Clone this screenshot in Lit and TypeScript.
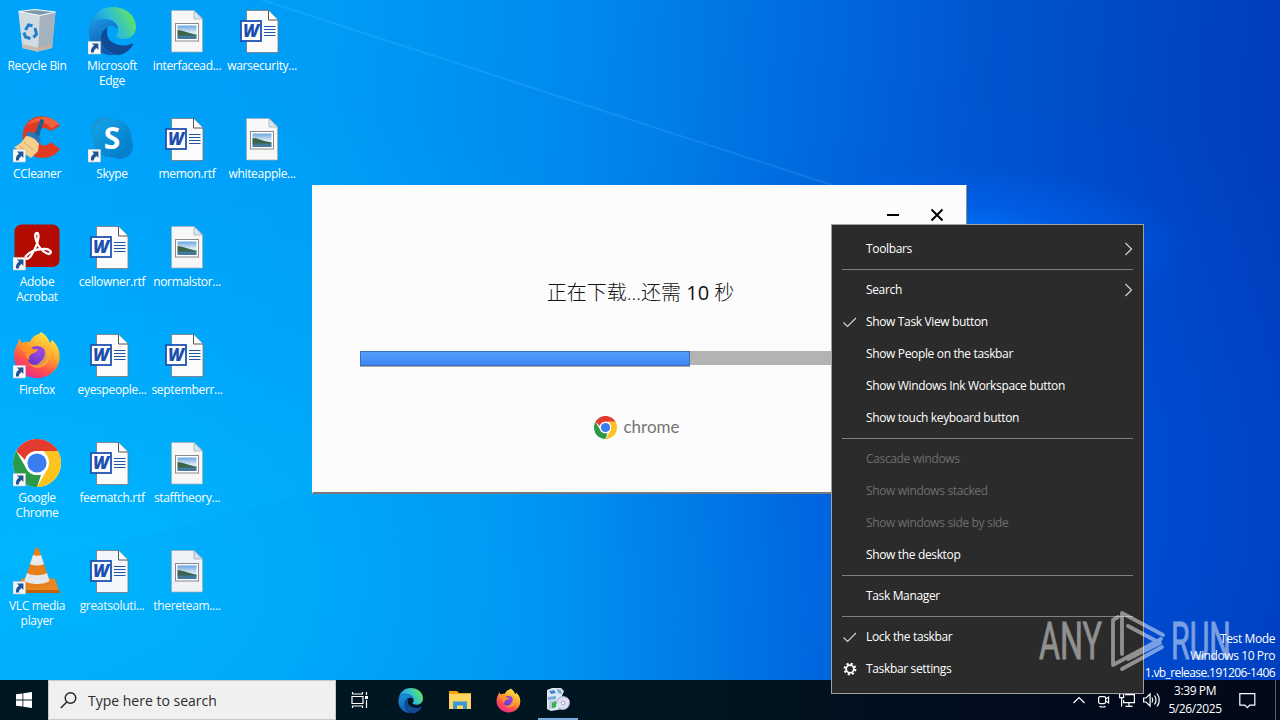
import { LitElement, css, html, svg, nothing } from 'lit'
import { customElement, property, state } from 'lit/decorators.js'
import { classMap } from 'lit/directives/class-map.js'

const shortcut = svg`
  <rect x="0" y="34.5" width="12.5" height="12.5" fill="#f8f8f8" stroke="#c9c9c9" stroke-width=".6"/>
  <path d="M4 36.6h6.4v6.2l-2-1.8c-1.6 1.1-2.4 2.6-2.6 4.4H3c-.5-3 .6-5.2 3-7z" fill="#1f5596"/>
`

const edgeArt = svg`
  <defs>
    <linearGradient id="edge-a" x1="0" y1=".6" x2="1" y2=".2">
      <stop offset="0" stop-color="#1488d8"/><stop offset=".45" stop-color="#2cb9dd"/><stop offset="1" stop-color="#66eb50"/>
    </linearGradient>
    <linearGradient id="edge-b" x1="0" y1="0" x2=".4" y2="1">
      <stop offset="0" stop-color="#1a9ae4"/><stop offset="1" stop-color="#0f57ad"/>
    </linearGradient>
  </defs>
  <path d="M1 22C2 9 12 0 25 0c13 0 23 9 23 20 0 8-6 12-12 12-5 0-8-1-8-3 0-1 2-2 2-6 0-6-6-11-14-11C9 12 3 16 1 22z" fill="url(#edge-a)"/>
  <path d="M1 22c3-7 9-10 15-10 8 0 14 4 14 10-2-3-6-4-9-3-6 2-8 7-8 12 0 9 7 16 15 17C12 50-1 38 1 22z" fill="url(#edge-b)"/>
  <path d="M20 20c-5 2-7 7-7 11 0 10 9 17 18 17 6-1 11-5 14-10 .6-1-.4-2-1.500-1.300C35 41 18 37 19 25c0-2 .4-4 1-5z" fill="#104a96"/>
`

const firefoxArt = svg`
  <defs>
    <linearGradient id="fox" x1=".8" y1="0" x2=".25" y2="1">
      <stop offset="0" stop-color="#fff14a"/><stop offset=".4" stop-color="#ffa72b"/>
      <stop offset=".7" stop-color="#ff4f4b"/><stop offset="1" stop-color="#e5259c"/>
    </linearGradient>
    <radialGradient id="fox-eye" cx=".6" cy=".3" r=".8">
      <stop offset="0" stop-color="#a447e6"/><stop offset="1" stop-color="#5b38c0"/>
    </radialGradient>
  </defs>
  <path d="M28 1c5 3 7 6 9 11 1-1 1.500-2 1.500-3.500C45 14 47 20 46.500 27 46 39 36 47 24 47S1 38 1 25c0-6 2-10 4-13 .3-2 .6-3.500 1.500-4.500C7 10 8 11 9 12c2-1 5-1.500 8-1 2-5 6-7.500 9-8z" fill="url(#fox)"/>
  <circle cx="24" cy="25" r="10" fill="url(#fox-eye)"/>
  <path d="M7 17c5-4 10-2 13 1 2 .3 4 .3 5 0-.5 3-4 4-6 5-3 1.500-3.500 4-2 6-4-1-5-5-4-8-2 0-4-1-6-4z" fill="#ff9328"/>
  <path d="M30 13c8 5 9 17 1 22-5 3-12 2-15-2 5 2 10 1 11-2 5-3 6-10 3-18z" fill="#ffb42e" opacity=".75"/>
`

const chromeArt = svg`
  <circle cx="24" cy="24" r="24" fill="#fff"/>
  <path d="M24 0c9 0 16.800 4.800 21 12H24c-6 0-11 4-12 9L3.200 12C7.400 4.800 15 0 24 0z" fill="#e33b2e"/>
  <path d="M3.200 12 13.600 30c2 3.800 6 6 10.400 6l4 0L24 48C10.700 48 0 37.300 0 24 0 19.600 1.200 15.500 3.200 12z" fill="#2a9a48"/>
  <path d="M45 12c2 3.600 3 7.700 3 12 0 13.300-10.700 24-24 24l10.400-18c2.600-5 1.600-13-4-18z" fill="#fcc31e"/>
  <circle cx="24" cy="24" r="12" fill="#fff"/>
  <circle cx="24" cy="24" r="9.600" fill="#3a7df0"/>
`

const art: Record<string, unknown> = {
  bin: svg`
    <path d="M5.500 4.500 22 2.500 42.500 5 39 41 24 44.500 9.500 41z" fill="#c6d2da"/>
    <path d="M5.500 4.500 27 8.500 25 44.500 9.500 41z" fill="#cfdae1"/>
    <path d="M27 8.500 42.500 5 39 41 25 44.500z" fill="#a3b2bd"/>
    <path d="M5.500 4.500 22 2.500 42.500 5 27 8.500z" fill="#7d98a9" stroke="#f4fafc" stroke-width="1.200"/>
    <path d="M9 37l15 3.500L39.500 37 39 41l-14 3.500L9.500 41z" fill="#c8b3a4" opacity=".8"/>
    <g fill="none" stroke="#1b7fd0" stroke-width="3">
      <path d="m12.500 23 3-5 4 .8"/><path d="m22 21 1.500 6-3 3.500"/><path d="m17.500 31.500-5-1.500-1.500-4.500"/>
    </g>`,
  edge: edgeArt,
  firefox: firefoxArt,
  chrome: chromeArt,
  ccleaner: svg`
    <path d="M47 11C38-2 19-2 12 11c-7 14 2 32 17 32 8 0 14-3 18-9l-9-7c-4 5-11 5-13-2-3-8 3-17 13-9z" fill="#e13a22"/>
    <path d="M46 9C37-1 21 0 14 10c9-5 19-5 24 4z" fill="#f0603f"/>
    <path d="m27.500 4 3.500 1-6 20-5-2z" fill="#1d5e9b"/>
    <path d="M15 17c4-1 10 2 13 8l-3 4-13-7z" fill="#2f75b5"/>
    <path d="M13 21c5 0 10 3 13 8l-1 7-7 7L1 32c5-2 9-6 12-11z" fill="#f5cf8e"/>
    <path d="m6 31 6 4m-1-8 9 8" stroke="#d8a45c" fill="none"/>`,
  skype: svg`
    <defs><linearGradient id="sky" x2="1" y2="1"><stop stop-color="#16a6e8"/><stop offset="1" stop-color="#0078c6"/></linearGradient></defs>
    <circle cx="16" cy="15" r="13" fill="#1496d8"/><circle cx="32" cy="31" r="13" fill="#0a80cc"/>
    <circle cx="24" cy="23" r="19.500" fill="url(#sky)"/>
    <text x="24" y="34" text-anchor="middle" class="skype-s">S</text>`,
  acrobat: svg`
    <rect x="1.500" y="1.500" width="45" height="42.500" rx="7" fill="#b30b00"/>
    <path d="M24 10c-3 0-2 6 1 12 3 5 8 9 11 9 4-1 1-6-6-5-7 0-14 3-17 7-2 4 3 4 6-2 3-5 6-12 6.500-17 0-2-.5-4-1.500-4z" fill="none" stroke="#fff" stroke-width="2.300"/>`,
  vlc: svg`
    <path d="m12 31-4 1-4 14h43l-5-14-6-1z" fill="#f18a1c"/>
    <path d="M4 46h43l-.8-3H5z" fill="#c76404"/>
    <path d="M22.500 1h3l12 36c-4 5-23 5-27 0z" fill="#f07f14"/>
    <path d="m20 8-3 9c4 2 10 2 14 0l-3-9c-2.500 1-5.500 1-8 0z" fill="#ebebeb"/>
    <path d="m14 26-2.700 8c5 4 20.500 4 25.300 0L34 26c-5 3-15 3-20 0z" fill="#ebebeb"/>`,
  word: svg`
    <path d="M8.500 3.500h22l9.500 9.500v32.500H8.500z" fill="#fbfbfb" stroke="#777" stroke-width=".8"/>
    <path d="M30.500 3.500V13H40" fill="#fff" stroke="#555" stroke-width="1"/>
    <path d="M26 19.500h11.500M26 22.500h11.500M26 25.500h11.500M26 28.500h11.500" stroke="#2054a8" stroke-width="1"/>
    <rect x="3" y="14" width="20" height="20" fill="#fff" stroke="#1e53b2" stroke-width="1.800"/>
    <text x="13" y="30" text-anchor="middle" class="word-w">W</text>`,
  image: svg`
    <defs><linearGradient id="pic" x2="0" y2="1"><stop stop-color="#6ba5df"/><stop offset=".5" stop-color="#d7e7f2"/><stop offset="1" stop-color="#d7e7f2"/></linearGradient></defs>
    <path d="M8.500 3.500h22.500l8.500 8.500v33H8.500z" fill="#f7f7f7" stroke="#aaa" stroke-width=".7"/>
    <path d="M31 3.500V12h8.500z" fill="#d9e6ee" stroke="#9ab" stroke-width=".7"/>
    <rect x="12.500" y="16.500" width="23" height="17.500" fill="#fff" stroke="#8b8b8b"/>
    <path d="M14.500 18.500h19v13.500h-19z" fill="url(#pic)"/>
    <path d="M14.500 23c5 0 12 4 19 4.500V29h-19z" fill="#3d6349"/>
    <path d="M14.500 28.500h19V32h-19z" fill="#45799b"/>`,
}

interface IconItem {
  icon: string
  label: string
  link?: boolean
}

const columns: IconItem[][] = [
  [
    { icon: 'bin', label: 'Recycle Bin' },
    { icon: 'ccleaner', label: 'CCleaner', link: true },
    { icon: 'acrobat', label: 'Adobe Acrobat', link: true },
    { icon: 'firefox', label: 'Firefox', link: true },
    { icon: 'chrome', label: 'Google Chrome', link: true },
    { icon: 'vlc', label: 'VLC media player', link: true },
  ],
  [
    { icon: 'edge', label: 'Microsoft Edge', link: true },
    { icon: 'skype', label: 'Skype', link: true },
    { icon: 'word', label: 'cellowner.rtf' },
    { icon: 'word', label: 'eyespeople...' },
    { icon: 'word', label: 'feematch.rtf' },
    { icon: 'word', label: 'greatsoluti...' },
  ],
  [
    { icon: 'image', label: 'interfacead...' },
    { icon: 'word', label: 'memon.rtf' },
    { icon: 'image', label: 'normalstor...' },
    { icon: 'word', label: 'septemberr...' },
    { icon: 'image', label: 'stafftheory...' },
    { icon: 'image', label: 'thereteam....' },
  ],
  [
    { icon: 'word', label: 'warsecurity...' },
    { icon: 'image', label: 'whiteapple...' },
  ],
]

@customElement('desktop-icon')
export class DesktopIcon extends LitElement {
  @property({ type: String }) icon = ''
  @property({ type: String }) label = ''
  @property({ type: Boolean }) link = false

  static styles = css`
    :host {
      display: flex;
      flex-direction: column;
      align-items: center;
      width: 74px;
      height: 108px;
      box-sizing: border-box;
      padding-top: 7px;
    }
    svg {
      flex: none;
      width: 48px;
      height: 48px;
    }
    .label {
      margin-top: 3px;
      max-width: 74px;
      font: 12px/15px 'Open Sans', 'Noto Sans', sans-serif;
      letter-spacing: -0.32px;
      color: #fff;
      text-align: center;
    }
    .skype-s {
      font: bold 30px 'Open Sans', sans-serif;
      fill: #fff;
    }
    .word-w {
      font: italic 900 17px 'Open Sans', sans-serif;
      fill: #1e4fae;
    }
  `

  render() {
    return html`
      <svg viewBox="0 0 48 48">${art[this.icon]}${this.link ? shortcut : nothing}</svg>
      <span class="label">${this.label}</span>
    `
  }
}

@customElement('setup-window')
export class SetupWindow extends LitElement {
  @property({ type: Number }) done = 330

  static styles = css`
    :host {
      display: flex;
      flex-direction: column;
      align-items: center;
      box-sizing: border-box;
      width: 655px;
      height: 309px;
      background: #fbfcfb;
      border: 1px solid #fff;
      border-right-color: #8e8e8e;
      border-bottom: 2px solid #787878;
    }
    .controls {
      align-self: flex-end;
      display: flex;
      gap: 30px;
      padding: 22px 22px 0 0;
    }
    .controls svg {
      width: 14px;
      height: 14px;
    }
    .status {
      margin-top: 56px;
      padding-left: 2px;
      font: 300 20px/30px 'Open Sans', 'Noto Sans CJK SC', sans-serif;
      color: #111;
      white-space: pre;
    }
    .num {
      font-weight: 400;
    }
    .track {
      width: 560px;
      height: 14px;
      margin-top: 43px;
      background: #b3b3b3;
    }
    .fill {
      box-sizing: border-box;
      height: 15px;
      border: 1px solid #3a70ba;
      background: linear-gradient(#559cfb, #3d88f5);
      box-shadow: 0 1px #a9a9a9;
    }
    .brand {
      display: flex;
      align-items: center;
      gap: 6px;
      margin-top: 50px;
      margin-right: 5px;
      font: 17px/24px Lato, sans-serif;
      color: #757575;
    }
    .brand svg {
      width: 23px;
      height: 23px;
    }
  `

  render() {
    return html`
      <div class="controls">
        <svg viewBox="0 0 14 14"><path d="M1 7h12" stroke="#000" stroke-width="2"/></svg>
        <svg viewBox="0 0 14 14"><path d="m1.500 1.500 11 11m0-11-11 11" stroke="#000" stroke-width="2"/></svg>
      </div>
      <div class="status">正在下载...还需 <span class="num">10</span> 秒</div>
      <div class="track"><div class="fill" style="width:${this.done}px"></div></div>
      <div class="brand"><svg viewBox="0 0 48 48">${chromeArt}</svg><span>chrome</span></div>
    `
  }
}

interface MenuItem {
  label: string
  mark?: 'check' | 'gear'
  sub?: boolean
  disabled?: boolean
}

@customElement('taskbar-menu')
export class TaskbarMenu extends LitElement {
  private groups: MenuItem[][] = [
    [{ label: 'Toolbars', sub: true }],
    [
      { label: 'Search', sub: true },
      { label: 'Show Task View button', mark: 'check' },
      { label: 'Show People on the taskbar' },
      { label: 'Show Windows Ink Workspace button' },
      { label: 'Show touch keyboard button' },
    ],
    [
      { label: 'Cascade windows', disabled: true },
      { label: 'Show windows stacked', disabled: true },
      { label: 'Show windows side by side', disabled: true },
      { label: 'Show the desktop' },
    ],
    [{ label: 'Task Manager' }],
    [
      { label: 'Lock the taskbar', mark: 'check' },
      { label: 'Taskbar settings', mark: 'gear' },
    ],
  ]

  static styles = css`
    :host {
      display: block;
      box-sizing: border-box;
      width: 313px;
      height: 470px;
      padding: 8px 10px;
      background: #2b2b2b;
      border: 1px solid #a0a0a0;
      font: 12px/32px 'Open Sans', 'Noto Sans', sans-serif;
      letter-spacing: -0.35px;
      color: #fff;
    }
    .group + .group {
      border-top: 1px solid #808080;
      margin-top: 4px;
      padding-top: 4px;
    }
    .item {
      display: grid;
      grid-template-columns: 24px 1fr 10px;
      align-items: center;
      height: 32px;
    }
    .item.disabled {
      color: #6d6d6d;
    }
    svg {
      display: block;
      fill: none;
      stroke: #d4d4d4;
      stroke-width: 1.2;
    }
  `

  mark(kind?: string) {
    if (kind === 'check') {
      return html`<svg width="16" height="16"><path d="m1.500 8.500 4 4L14 4"/></svg>`
    }
    if (kind === 'gear') {
      return html`<svg width="16" height="16">
        <circle cx="8" cy="8" r="3.800" stroke="#fff" stroke-width="1.700"/>
        <circle cx="8" cy="8" r="5.300" stroke="#fff" stroke-width="2.200" stroke-dasharray="2.080 2.080"/>
      </svg>`
    }
    return html`<span></span>`
  }

  render() {
    return html`${this.groups.map(
      (g) => html`<div class="group">
        ${g.map(
          (i) => html`<div class=${classMap({ item: true, disabled: !!i.disabled })}>
            ${this.mark(i.mark)}
            <span>${i.label}</span>
            ${i.sub ? html`<svg width="10" height="14"><path d="m2.500 1 6 6-6 6"/></svg>` : nothing}
          </div>`,
        )}
      </div>`,
    )}`
  }
}

@customElement('task-bar')
export class TaskBar extends LitElement {
  @state() time = '3:39 PM'
  @state() date = '5/26/2025'

  static styles = css`
    :host {
      display: flex;
      height: 40px;
      background: linear-gradient(90deg, #001722, #001520 50%, #020b1c 85%, #020918);
      font-family: 'Open Sans', 'Noto Sans', sans-serif;
      color: #fff;
    }
    svg {
      display: block;
    }
    .start,
    .app {
      display: flex;
      align-items: center;
      justify-content: center;
      width: 48px;
    }
    .search {
      box-sizing: border-box;
      display: flex;
      align-items: center;
      gap: 11px;
      width: 288px;
      padding-left: 11px;
      border: 1px solid #c8c8c8;
      background: #f0f0f0;
      color: #2b2b2b;
      font-size: 14px;
    }
    .apps {
      display: flex;
      padding-left: 1px;
    }
    .app {
      width: 49px;
      box-sizing: border-box;
    }
    .app.view {
      padding-right: 3px;
    }
    .app.open {
      background: linear-gradient(#76a9dc, #76a9dc) center bottom / 40px 2px no-repeat;
    }
    .tray {
      display: flex;
      align-items: center;
      margin-left: auto;
    }
    .tray svg {
      fill: none;
      stroke: #fff;
      stroke-width: 1.2;
    }
    .clock {
      width: 60px;
      margin: 0 14px 0 2px;
      font-size: 12px;
      line-height: 18px;
      text-align: center;
      letter-spacing: -0.4px;
    }
    .peek {
      align-self: stretch;
      width: 4px;
      margin-left: 19px;
      border-left: 1px solid #56606b;
    }
  `

  render() {
    return html`
      <div class="start">
        <svg width="16" height="16"><path fill="#fff" d="M0 2.300 6.500 1.400v6.200H0zM7.300 1.300 16 0v7.600H7.300zM0 8.400h6.500v6.200L0 13.700zM7.300 8.400H16V16l-8.700-1.300z"/></svg>
      </div>
      <div class="search">
        <svg width="17" height="17" fill="none" stroke="#222" stroke-width="1.400"><circle cx="10.500" cy="6" r="5.300"/><path d="M6.800 10 .8 16"/></svg>
        <span>Type here to search</span>
      </div>
      <div class="apps">
        <div class="app view">
          <svg width="18" height="18" fill="none" stroke="#fff" stroke-width="1.200"><path d="M1 5.500h11v7H1zM1.500 1v2h10V1M1.500 17v-2h10v2M15.500 1v3M15.500 9v8"/><path d="M14 5h3v3h-3z" fill="#fff" stroke="none"/></svg>
        </div>
        <div class="app"><svg width="25" height="25" viewBox="0 0 48 48">${edgeArt}</svg></div>
        <div class="app">
          <svg width="22" height="18"><path d="M0 0h8l2 2h12v4H0z" fill="#f0a30a"/><path d="M0 3h22v15H0z" fill="#fcd462"/><path d="M4 10.500h14V18h-4v-3.500H8V18H4z" fill="#3a96d6"/></svg>
        </div>
        <div class="app"><svg width="25" height="25" viewBox="0 0 48 48">${firefoxArt}</svg></div>
        <div class="app open">
          <svg width="24" height="24">
            <path d="M1 2 6 0h9l3 3-2 5 1 13-12 2-4-2z" fill="#dce8f3"/>
            <path d="m3 3 5-1 2 3-5 1z" fill="#4c88c6"/><path d="m11 1 4 1 1 4-4-1zM2 9l8-1v3l-8 1z" fill="#7ba9d6"/>
            <path d="m3 13 6-1v8l-6 1z" fill="#b5cde3"/><path d="m6 15 4-2v6l-4 1z" fill="#3fae49"/>
            <circle cx="17" cy="15" r="6.500" fill="#dcdef2" stroke="#9fa6cc"/>
            <path d="m17 15 4-5.500a7 7 0 0 1 2.500 4z" fill="#f3d9f0"/><path d="m17 15-5 5a7 7 0 0 1-2-4z" fill="#d3f0e6"/>
            <circle cx="17" cy="15" r="1.800" fill="#fff" stroke="#a0a5c8"/>
          </svg>
        </div>
      </div>
      <div class="tray">
        <svg width="24" height="16"><path d="m6.500 11 5.500-5.500 5.500 5.500"/></svg>
        <svg width="24" height="18"><rect x="7.600" y="5.600" width="7" height="7" rx="1.500"/><path d="m14.600 8 3-2v6l-3-2M8.500 15.400q3.500 1.200 6 0"/></svg>
        <svg width="24" height="18"><path d="M10 3.600h9.400v8H8.600V9M14 11.600V15M10.500 15.400h7M4.600 2.600h4v4h-4zM6.600 6.600v8.800"/></svg>
        <svg width="24" height="18"><path d="M4.600 7v4h2.500l4 4V3L7 7zM13 6.500q1.600 2.500 0 5M15.500 4.500q3 4.500 0 9M18 2.500q4.500 6.500 0 13"/></svg>
        <div class="clock">${this.time}<br />${this.date}</div>
        <svg width="17" height="17"><path d="M.8 1.600h15v11.500h-5L8.300 15.600 5.800 13.100h-5z"/></svg>
        <div class="peek"></div>
      </div>
    `
  }
}

@customElement('app-root')
export class AppRoot extends LitElement {
  static styles = css`
    :host {
      position: relative;
      display: flex;
      flex-direction: column;
      width: 1280px;
      height: 720px;
      overflow: hidden;
      background:
        radial-gradient(ellipse 230px 80px at 960px 245px, rgba(0, 122, 255, 1), rgba(0, 105, 250, 0.45) 50%, transparent),
        radial-gradient(ellipse 850px 500px at 60px 580px, rgba(0, 190, 255, 0.75), rgba(0, 180, 255, 0.4) 50%, transparent),
        radial-gradient(ellipse 500px 400px at 1000px 500px, rgba(0, 84, 224, 0.6), transparent),
        linear-gradient(93deg, #00a4fb 0, #009cf6 25%, #0088ee 45%, #006de0 60%, #0055cf 75%, #0046c5 88%, #003bba 100%);
    }
    .rays {
      position: absolute;
      inset: 0;
    }
    .icons {
      display: flex;
      flex: 1;
      gap: 1px;
    }
    .window {
      position: absolute;
      left: 312px;
      top: 185px;
    }
    .build {
      position: absolute;
      right: 5px;
      top: 630px;
      font: 12px/17px 'Open Sans', 'Noto Sans', sans-serif;
      letter-spacing: -0.4px;
      color: #fff;
      text-align: right;
    }
    .version {
      letter-spacing: -0.6px;
    }
    .menu {
      position: absolute;
      left: 831px;
      top: 224px;
    }
    .watermark {
      position: absolute;
      left: 1036px;
      top: 606px;
      opacity: 0.48;
    }
    .watermark text {
      font: 52px Roboto, sans-serif;
      fill: #fff;
      stroke: #fff;
      stroke-width: 0.8;
    }
    .watermark path {
      fill: none;
      stroke: #fff;
      stroke-width: 3.8;
      stroke-linejoin: round;
      stroke-linecap: round;
    }
  `

  render() {
    return html`
      <svg class="rays" width="1280" height="680">
        <path d="M262 0 835 186" stroke="#7fd0ff" stroke-width="2" opacity=".15"/>
        <path d="M0 572 312 494H967V680H0z" fill="#0060d0" opacity=".03"/>
      </svg>
      <div class="icons">
        ${columns.map(
          (col) => html`<div>
            ${col.map((i) => html`<desktop-icon .icon=${i.icon} .label=${i.label} .link=${!!i.link}></desktop-icon>`)}
          </div>`,
        )}
      </div>
      <setup-window class="window"></setup-window>
      <div class="build">
        <div>Test Mode</div>
        <div>Windows 10 Pro</div>
        <div class="version">1.vb_release.191206-1406</div>
      </div>
      <task-bar></task-bar>
      <taskbar-menu class="menu"></taskbar-menu>
      <svg class="watermark" width="200" height="70">
        <text x="3" y="53" textLength="63" lengthAdjust="spacingAndGlyphs">ANY</text>
        <path d="M82 11 77 14V59L125 33M86 48V7L127 29M92 20 124 37 92 53M86 63 126 41"/>
        <text x="135" y="53" textLength="60" lengthAdjust="spacingAndGlyphs">RUN</text>
      </svg>
    `
  }
}
